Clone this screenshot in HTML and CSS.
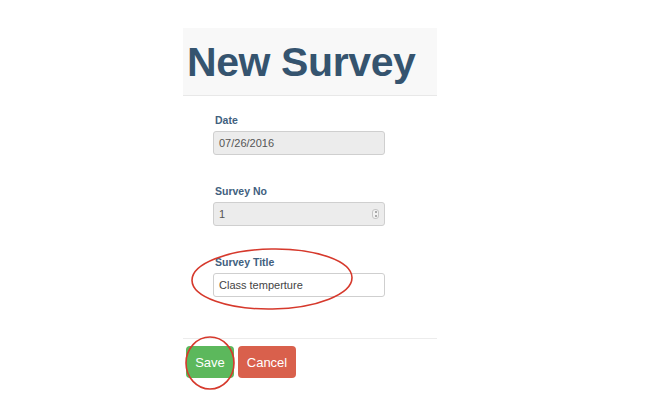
FILE: index.html
```html
<!DOCTYPE html>
<html>
<head>
<meta charset="utf-8">
<link rel="stylesheet" href="styles.css">
</head>
<body>
<div class="page">
  <div class="panel">
    <div class="header"><h1 class="title">New Survey</h1></div>
    <form class="form">
      <div class="group">
        <label class="label">Date</label>
        <div class="input disabled">07/26/2016</div>
      </div>
      <div class="group">
        <label class="label">Survey No</label>
        <div class="input disabled num">1<span class="spin"><i class="up"></i><i class="down"></i></span></div>
      </div>
      <div class="group">
        <label class="label">Survey Title</label>
        <div class="input">Class temperture</div>
      </div>
    </form>
    <div class="actions">
      <button class="btn save" type="button">Save</button>
      <button class="btn cancel" type="button">Cancel</button>
    </div>
  </div>
  <svg class="marks" width="659" height="404" viewBox="0 0 659 404">
    <ellipse cx="272" cy="279" rx="80" ry="30" fill="none" stroke="#d6392c" stroke-width="1.6" transform="rotate(-1 272 279)"/>
    <ellipse cx="210" cy="363" rx="24" ry="26" fill="none" stroke="#d6392c" stroke-width="1.6"/>
  </svg>
</div>
</body>
</html>
```
FILE: styles.css
```css
html, body { margin: 0; padding: 0; background: #fff; }
body { font-family: "Liberation Sans", Arial, sans-serif; }
.page { position: relative; width: 659px; height: 404px; overflow: hidden; }
.panel { margin-left: 183px; width: 254px; padding-top: 28px; }
.header {
  height: 67px;
  background: #f8f8f8;
  border-bottom: 1px solid #e8e8e8;
  display: flex;
  align-items: center;
}
.title {
  margin: 0;
  padding-left: 4px;
  font-size: 41px;
  font-weight: bold;
  color: #35546f;
  letter-spacing: -0.4px;
  line-height: 1;
  position: relative;
  top: 1px;
}
.form { padding: 17px 0 0 30px; display: flex; flex-direction: column; gap: 29px; }
.group { display: flex; flex-direction: column; }
.label {
  font-size: 10.5px;
  line-height: 14px;
  color: #41607e;
  margin: 0 0 4px 2px;
  font-weight: bold;
}
.input {
  box-sizing: border-box;
  width: 172px;
  height: 24px;
  border: 1px solid #cfcfcf;
  border-radius: 3px;
  background: #fff;
  font-size: 11px;
  line-height: 22px;
  padding-left: 5px;
  color: #444;
  position: relative;
}
.input.disabled { background: #ececec; color: #555; }
.spin {
  position: absolute;
  right: 5px;
  top: 6px;
  width: 7px;
  height: 10px;
  border: 1px solid #c6c6c6;
  border-radius: 3px;
  box-sizing: border-box;
  background: #f2f2f2;
}
.spin i { position: absolute; left: 1.5px; width: 2px; height: 2px; background: #aaa; }
.spin .up { top: 1px; }
.spin .down { bottom: 1px; }
.actions {
  margin-top: 41px;
  border-top: 1px solid #ececec;
  padding: 7px 0 0 3px;
  display: flex;
  gap: 4px;
}
.btn {
  height: 32px;
  border: none;
  border-radius: 4px;
  color: #fff;
  font-family: "Liberation Sans", Arial, sans-serif;
  font-size: 13px;
  padding: 0;
}
.save { width: 48px; background: #5cb85c; }
.cancel { width: 58px; background: #d9604c; }
.marks { position: absolute; left: 0; top: 0; pointer-events: none; }
```
